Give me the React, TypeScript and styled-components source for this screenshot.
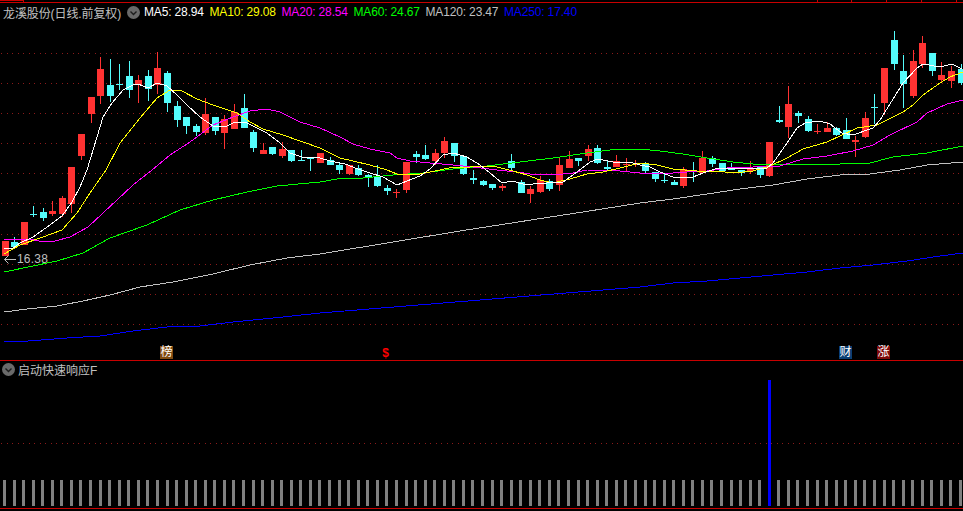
import React from 'react';
import styled, { createGlobalStyle } from 'styled-components';

const GlobalStyle = createGlobalStyle`
  html, body {
    margin: 0;
    padding: 0;
    background: #000;
    overflow: hidden;
  }
`;

const RED_RULE = '#c80000';
const FONT = `'Liberation Sans', 'Noto Sans CJK SC', sans-serif`;

const Screen = styled.div`
  width: 963px;
  height: 511px;
  display: flex;
  flex-direction: column;
  background: #000;
  font-family: ${FONT};
  font-size: 12px;
  color: #c0c0c0;
`;

const TopStrip = styled.div`
  position: relative;
  height: 2px;
  border-bottom: 1px solid ${RED_RULE};
  flex: none;
`;

const TopTab = styled.div`
  position: absolute;
  left: 0;
  top: 0;
  width: 23px;
  height: 1px;
  background: ${RED_RULE};
`;

const Tick = styled.div<{ $x: number }>`
  position: absolute;
  left: ${(p) => p.$x}px;
  top: 0;
  width: 1px;
  height: 2px;
  background: ${RED_RULE};
`;

const MainPane = styled.div`
  position: relative;
  height: 357px;
  flex: none;
  border-bottom: 1px solid ${RED_RULE};
`;

const IndicatorPane = styled.div`
  position: relative;
  height: 147px;
  flex: none;
  border-bottom: 1px solid ${RED_RULE};
`;

const ChartSvg = styled.svg`
  display: block;
  width: 963px;
`;

const Legend = styled.div`
  position: absolute;
  left: 3px;
  top: 2px;
  display: flex;
  align-items: center;
  height: 14px;
  white-space: nowrap;
`;

const Title = styled.span`
  width: 121px;
  letter-spacing: -0.1px;
`;

const ToggleSvg = styled.svg`
  display: block;
  flex: none;
  width: 13px;
  height: 13px;
`;

const ToggleIcon: React.FC<{ className?: string }> = ({ className }) => (
  <ToggleSvg className={className} viewBox="0 0 13 13">
    <circle cx={6.5} cy={6.5} r={6.5} fill="#6a6a6a" />
    <path d="M3.5 5.5 L6.5 8.5 L9.5 5.5" fill="none" stroke="#1c1c1c" strokeWidth={1.4} />
  </ToggleSvg>
);

const LegendToggle = styled(ToggleIcon)`
  margin: 0 4px 0 3px;
`;

const MaItem = styled.span<{ $color: string }>`
  color: ${(p) => p.$color};
  margin-right: 5.6px;
  letter-spacing: -0.15px;
`;

const PaneHeader = styled.div`
  position: absolute;
  left: 2px;
  top: 1px;
  display: flex;
  align-items: center;
  gap: 3px;
  height: 14px;
  white-space: nowrap;
`;

const LowLabel = styled.div`
  position: absolute;
  left: 4px;
  top: 249px;
  display: flex;
  align-items: center;
  gap: 1px;
  height: 14px;
  letter-spacing: 0.2px;
`;

const Marker = styled.div<{ $x: number; $bg: string }>`
  position: absolute;
  left: ${(p) => p.$x}px;
  top: 343px;
  width: 13px;
  height: 13px;
  line-height: 13px;
  text-align: center;
  font-size: 12px;
  color: #fff;
  background: ${(p) => p.$bg};
`;

const DollarMark = styled.div`
  position: absolute;
  left: 381px;
  top: 344px;
  width: 9px;
  height: 13px;
  line-height: 13px;
  text-align: center;
  font-weight: 700;
  font-size: 12px;
  color: #ff0000;
`;

type Candle = ['r' | 'c', number, number, number, number];

// kind, body top, body bottom, wick top, wick bottom
const candles: Candle[] = [
  ['r', 241, 256, 241, 256], ['c', 242, 247, 237, 248], ['r', 222, 245, 222, 245], ['c', 214, 215, 206, 217],
  ['c', 212, 218, 208, 221], ['r', 211, 214, 201, 216], ['r', 198, 214, 196, 217], ['r', 167, 204, 167, 213],
  ['r', 134, 156, 134, 160], ['r', 97, 114, 97, 123], ['r', 69, 96, 57, 104], ['c', 85, 96, 59, 102],
  ['c', 84, 85, 64, 90], ['c', 76, 90, 61, 98], ['r', 80, 85, 75, 103], ['c', 76, 89, 70, 101],
  ['r', 68, 85, 52, 94], ['c', 73, 103, 71, 112], ['c', 106, 120, 101, 127], ['c', 117, 126, 117, 134],
  ['c', 126, 132, 124, 136], ['r', 114, 133, 98, 135], ['c', 117, 131, 117, 135], ['r', 119, 133, 115, 149],
  ['r', 112, 129, 104, 129], ['c', 108, 128, 94, 128], ['c', 132, 148, 130, 152], ['r', 150, 154, 143, 154],
  ['c', 147, 154, 147, 155], ['r', 149, 156, 142, 158], ['c', 150, 161, 150, 162], ['c', 160, 161, 150, 161],
  ['c', 158, 159, 157, 171], ['r', 153, 163, 153, 163], ['c', 160, 165, 157, 165], ['c', 165, 170, 163, 174],
  ['r', 165, 174, 165, 175], ['c', 168, 175, 165, 176], ['c', 175, 177, 174, 187], ['c', 177, 186, 165, 187],
  ['c', 188, 191, 185, 195], ['r', 192, 193, 189, 198], ['r', 162, 190, 162, 193], ['c', 154, 157, 151, 163],
  ['c', 155, 159, 145, 160], ['r', 153, 161, 149, 165], ['r', 141, 153, 137, 158], ['c', 143, 156, 143, 162],
  ['c', 156, 174, 156, 175], ['c', 178, 180, 170, 184], ['c', 181, 185, 180, 186], ['c', 184, 188, 184, 190],
  ['r', 186, 188, 184, 191], ['c', 161, 168, 154, 170], ['c', 182, 193, 180, 193], ['r', 189, 194, 186, 203],
  ['r', 180, 192, 176, 193], ['c', 181, 189, 179, 191], ['r', 165, 185, 158, 191], ['r', 159, 168, 151, 168],
  ['c', 158, 161, 158, 166], ['r', 149, 156, 145, 161], ['c', 148, 163, 145, 164], ['c', 167, 169, 161, 170],
  ['r', 161, 167, 155, 167], ['r', 164, 165, 158, 171], ['r', 164, 165, 160, 167], ['c', 164, 171, 162, 173],
  ['c', 172, 179, 172, 182], ['c', 180, 181, 174, 183], ['c', 182, 185, 180, 185], ['r', 169, 186, 167, 188],
  ['c', 171, 172, 162, 182], ['r', 158, 173, 151, 174], ['c', 158, 164, 156, 167], ['c', 163, 171, 163, 172],
  ['c', 168, 170, 163, 170], ['c', 170, 173, 170, 176], ['r', 168, 171, 161, 174], ['c', 167, 175, 167, 178],
  ['r', 142, 176, 142, 177], ['c', 120, 122, 106, 123], ['r', 104, 127, 86, 138], ['c', 113, 116, 111, 123],
  ['c', 119, 131, 116, 132], ['r', 131, 132, 124, 134], ['r', 128, 132, 122, 132], ['c', 128, 135, 127, 136],
  ['c', 130, 139, 118, 139], ['r', 140, 142, 136, 157], ['r', 118, 137, 112, 138], ['c', 107, 108, 94, 124],
  ['r', 68, 103, 68, 115], ['c', 40, 64, 31, 70], ['c', 71, 84, 55, 108], ['r', 61, 96, 50, 98],
  ['r', 43, 64, 36, 68], ['c', 53, 71, 53, 76], ['r', 75, 80, 62, 82], ['r', 71, 81, 66, 88],
  ['c', 69, 83, 64, 85],
];

const lines: { color: string; pts: string }[] = [
  {
    color: '#0000ff',
    pts: '4,342 28,341 67,338 100,336 133,331 167,327 200,326 233,322 283,317 320,313 480,300 640,287 673,283 707,281 740,278 773,275 807,272 840,268 873,265 907,261 940,256 963,253',
  },
  {
    color: '#c0c0c0',
    pts: '4,312 27,309 57,306 83,301 110,295 140,287 173,282 213,274 250,265 287,258 320,254 460,231 602,209 640,203 673,199 707,194 740,189 773,185 807,179 840,175 870,174 900,170 927,165 963,162',
  },
  {
    color: '#00ff00',
    pts: '4,272 33,266 57,261 83,253 110,238 147,225 180,210 213,200 247,192 277,186 320,182 337,179 363,178 393,175 423,173 453,169 487,166 520,162 553,158 587,153 610,150 640,149 660,151 683,154 707,158 733,162 753,164 840,164 870,163 893,157 927,153 963,146',
  },
  {
    color: '#ff00ff',
    pts: '4,239 30,239 43,242 55,241 70,237 88,227 103,213 117,200 133,185 152,170 170,155 190,142 213,125 233,117 250,111 267,109 280,112 300,122 320,128 340,137 353,144 370,149 390,153 397,158 410,161 430,163 453,165 473,167 497,170 517,172 530,174 553,175 573,173 587,170 620,171 640,173 673,173 687,172 707,171 727,168 753,167 780,166 803,159 827,156 853,151 873,145 890,135 917,122 927,113 947,104 963,100',
  },
  {
    color: '#ffff00',
    pts: '4,254 20,245 43,237 62,230 77,213 90,193 106,170 120,143 140,118 157,98 170,90 182,91 197,99 213,105 237,113 250,122 263,129 283,135 320,148 340,158 353,161 370,165 387,170 397,174 420,174 440,170 453,167 470,167 493,166 513,171 527,175 540,180 553,183 570,179 587,174 603,172 620,168 640,163 657,165 673,169 697,171 717,171 733,173 753,171 770,166 787,158 803,149 827,142 857,128 877,125 903,112 913,105 923,95 940,83 950,77 963,72',
  },
  {
    color: '#ffffff',
    pts: '4,248 13,248 20,243 33,237 50,225 62,216 72,202 80,187 87,170 97,137 103,117 112,103 123,90 133,85 138,84 148,88 157,83 167,86 177,95 187,105 200,117 213,126 227,126 233,123 245,122 257,128 267,133 280,143 290,153 302,157 320,158 330,161 345,164 358,169 370,173 383,177 397,185 407,181 420,176 430,169 443,155 453,153 467,157 480,165 490,173 502,183 512,181 523,184 533,184 547,183 563,182 577,172 590,162 598,159 613,162 630,162 640,165 650,167 660,172 673,177 693,177 703,173 715,169 737,168 753,168 767,168 773,163 787,143 797,128 805,123 820,121 830,124 842,133 853,135 873,128 880,120 903,83 917,68 923,64 940,67 952,64 962,69',
  },
];

const maItems = [
  { label: 'MA5: 28.94', color: '#ffffff' },
  { label: 'MA10: 29.08', color: '#ffff00' },
  { label: 'MA20: 28.54', color: '#ff00ff' },
  { label: 'MA60: 24.67', color: '#00ff00' },
  { label: 'MA120: 23.47', color: '#c0c0c0' },
  { label: 'MA250: 17.40', color: '#0000ff' },
];

const gridRows = [53, 83, 113, 143, 173, 203, 234, 264, 294, 324];
const topTicks = [23, 817, 851, 886, 921, 956];

const STEP = 9.56;
const centerOf = (i: number) => Math.round(4.5 + STEP * i);

const GridRow: React.FC<{ y: number }> = ({ y }) => (
  <line x1={1} x2={963} y1={y + 0.5} y2={y + 0.5} stroke="#8b1a1a" strokeDasharray="1 4.5" />
);

const App: React.FC = () => {
  const bars = Array.from({ length: 101 }, (_, i) => i).filter((i) => i !== 80);

  return (
    <Screen>
      <GlobalStyle />
      <TopStrip>
        <TopTab />
        {topTicks.map((x) => (
          <Tick key={x} $x={x} />
        ))}
      </TopStrip>

      <MainPane>
        <ChartSvg height={357} viewBox="0 3 963 357" shapeRendering="crispEdges">
          {gridRows.map((y) => (
            <GridRow key={y} y={y} />
          ))}
          {candles.map(([kind, top, bottom, wickTop, wickBottom], i) => {
            const fill = kind === 'r' ? '#ff3232' : '#54fcfc';
            const cx = centerOf(i);
            return (
              <g key={i} fill={fill}>
                <rect x={cx} y={wickTop} width={1} height={wickBottom - wickTop} />
                <rect x={cx - 3} y={top} width={7} height={Math.max(1, bottom - top)} />
              </g>
            );
          })}
          {lines.map((l) => (
            <polyline key={l.color} points={l.pts} fill="none" stroke={l.color} strokeWidth={1} />
          ))}
        </ChartSvg>

        <Legend>
          <Title>龙溪股份(日线.前复权)</Title>
          <LegendToggle />
          {maItems.map((m) => (
            <MaItem key={m.label} $color={m.color}>
              {m.label}
            </MaItem>
          ))}
        </Legend>

        <LowLabel>
          <svg width={12} height={9} viewBox="0 0 12 9">
            <path d="M0.5 4.5 H12 M4.5 0.5 L0.5 4.5 L4.5 8.5" fill="none" stroke="#c0c0c0" />
          </svg>
          16.38
        </LowLabel>

        <Marker $x={160} $bg="#7f4a10">榜</Marker>
        <DollarMark>$</DollarMark>
        <Marker $x={839} $bg="#0b3f73">财</Marker>
        <Marker $x={877} $bg="#7d0a0a">涨</Marker>
      </MainPane>

      <IndicatorPane>
        <ChartSvg height={147} viewBox="0 361 963 147" shapeRendering="crispEdges">
          <GridRow y={443} />
          {bars.map((i) => (
            <rect key={i} x={Math.round(3 + STEP * i)} y={480} width={3} height={26} fill="#808080" />
          ))}
          <rect x={768} y={380} width={3} height={126} fill="#0000ff" />
        </ChartSvg>
        <PaneHeader>
          <ToggleIcon />
          <span>启动快速响应F</span>
        </PaneHeader>
      </IndicatorPane>
    </Screen>
  );
};

export default App;
